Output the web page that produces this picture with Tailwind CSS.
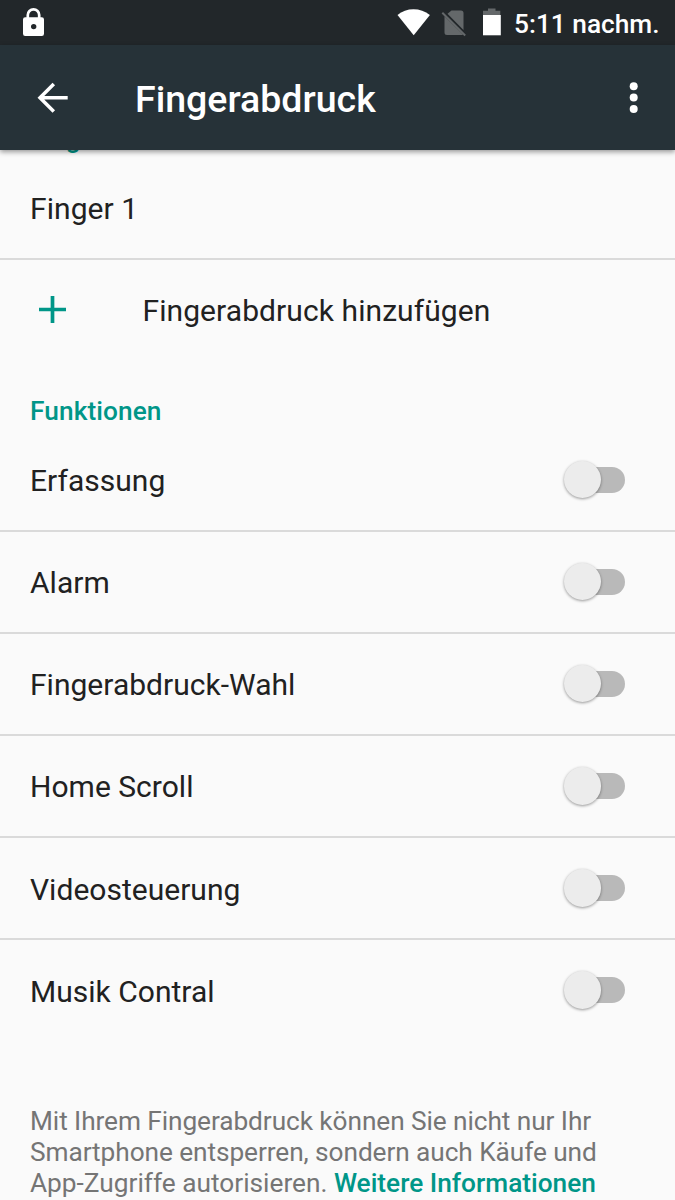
<!DOCTYPE html>
<html lang="de">
<head>
    <meta charset="UTF-8">
    <meta name="viewport" content="width=device-width, initial-scale=1.0">
    <title>Fingerabdruck</title>
    <script src="https://cdn.jsdelivr.net/npm/@tailwindcss/browser@4"></script>
</head>
<body class="bg-[#fafafa] font-['Roboto',sans-serif] text-[#212121] w-[675px] h-[1200px] overflow-hidden flex flex-col">
    <!-- Status bar -->
    <div class="bg-[#22272a] h-[45px] shrink-0 flex items-center justify-between pl-[22px] pr-[15.5px] relative z-10">
        <svg class="w-[23px] h-[30px] -mt-[2px]" viewBox="0 0 23 30">
            <path d="M5.8 11V8a5.7 5.7 0 0 1 11.4 0v3" fill="none" stroke="#fff" stroke-width="2.7"/>
            <path fill="#fff" fill-rule="evenodd" d="M3.2 10.2h16.6a2.2 2.2 0 0 1 2.2 2.2v14.3a2.2 2.2 0 0 1-2.2 2.2H3.2A2.2 2.2 0 0 1 1 26.7V12.4a2.2 2.2 0 0 1 2.2-2.2zM11.7 16.9a2.7 2.7 0 1 0 0 5.4 2.7 2.7 0 0 0 0-5.4z"/>
        </svg>
        <div class="flex items-center">
            <svg class="w-[104px] h-[45px] mr-[13px]" viewBox="0 0 104 45">
                <path fill="#fff" d="M.5 15C5 11.2 10.5 9.2 16.5 9.2S28 11.2 32.9 15L16.7 35.3z"/>
                <path fill="#64686a" d="M54.5 10.5h9.5a2.5 2.5 0 0 1 2.5 2.5v17L50.5 13.8zM47.5 16.2L66 34.6l-.8.4H50a2.5 2.5 0 0 1-2.5-2.5z"/>
                <path d="M45.3 12.8l22.9 22.7" fill="none" stroke="#64686a" stroke-width="2"/>
                <path fill="#64686a" d="M91 8.5h7.5v2.3h4.8V15H86v-4.2h5z"/>
                <path fill="#fff" d="M86 15h17.8v20.3H86z"/>
            </svg>
            <span class="text-[26.25px] font-medium leading-none text-white relative top-[2px]">5:11 nachm.</span>
        </div>
    </div>

    <!-- Toolbar -->
    <header class="bg-[#263238] h-[105px] shrink-0 flex items-center pl-[37px] pr-[36px] text-white shadow-[0_2px_5px_rgba(0,0,0,0.4)] relative z-10">
        <svg class="w-[32px] h-[32px]" viewBox="0 0 32 32" fill="none" stroke="#fff" stroke-width="3.5">
            <path d="M30.700 15.800H3.500M16.800 1.900L3 15.800l13.800 13.800"/>
        </svg>
        <h1 class="ml-[66px] text-[37.5px] font-medium leading-none relative top-[2px]">Fingerabdruck</h1>
        <svg class="w-[10px] h-[32px] ml-auto" viewBox="0 0 10 32" fill="#fff">
            <circle cx="4.7" cy="4.2" r="4"/>
            <circle cx="4.7" cy="15.6" r="4"/>
            <circle cx="4.7" cy="27" r="4"/>
        </svg>
    </header>

    <!-- Settings list, scrolled a little -->
    <main class="-mt-[26px] text-[30px]">
        <h2 class="h-[33px] pl-[30px] text-[26.25px] leading-[31px] font-medium text-[#009688]">Fingerabdrücke</h2>
        <div class="h-[103px] pl-[30px] pt-px flex items-center border-b-2 border-[#dadada] tracking-[0.08px]">Finger 1</div>
        <div class="h-[102px] flex items-center pl-[39px] pb-[4px]">
            <svg class="w-[27px] h-[27px]" viewBox="0 0 27 27" fill="none" stroke="#009688" stroke-width="3.7">
                <path d="M0 13.5h27M13.5 0v27"/>
            </svg>
            <span class="ml-[76.5px] relative top-[1px] tracking-[0.08px]">Fingerabdruck hinzufügen</span>
        </div>

        <h2 class="h-[68px] pl-[30px] pt-[34px] text-[26.25px] leading-[31px] font-medium tracking-[0.08px] text-[#009688]">Funktionen</h2>
        <div id="functions"></div>

        <p class="pl-[30px] pt-[63.5px] text-[26.25px] leading-[31px] text-[#757575] whitespace-nowrap">
            <span class="tracking-[-0.08px]">Mit Ihrem Fingerabdruck können Sie nicht nur Ihr<br>
            Smartphone entsperren, sondern auch Käufe und</span><br>
            App-Zugriffe autorisieren. <a class="font-medium text-[#009688]">Weitere Informationen</a>
        </p>
    </main>

    <script>
        const functions = ['Erfassung', 'Alarm', 'Fingerabdruck-Wahl', 'Home Scroll', 'Videosteuerung', 'Musik Contral'];
        const list = document.getElementById('functions');

        functions.forEach((name, i) => {
            const row = document.createElement('div');
            row.className = 'h-[102.1px] flex items-center justify-between pl-[30px] pr-[50.5px] border-b-2';
            row.classList.add(i < functions.length - 1 ? 'border-[#dadada]' : 'border-transparent');
            row.innerHTML = `
                <span class="relative top-[0.6px] tracking-[0.02px]">${name}</span>
                <div class="w-[61px] h-[38px] flex items-center relative -top-[0.5px]">
                    <div class="w-[37.5px] h-[37.5px] shrink-0 rounded-full bg-[#ececec] shadow-[0_1px_3px_rgba(0,0,0,0.4)] relative z-[1]"></div>
                    <div class="w-[42px] h-[26px] -ml-[18.5px] shrink-0 rounded-full bg-[#b9b9b9]"></div>
                </div>
            `;
            list.appendChild(row);
        });
    </script>
</body>
</html>
